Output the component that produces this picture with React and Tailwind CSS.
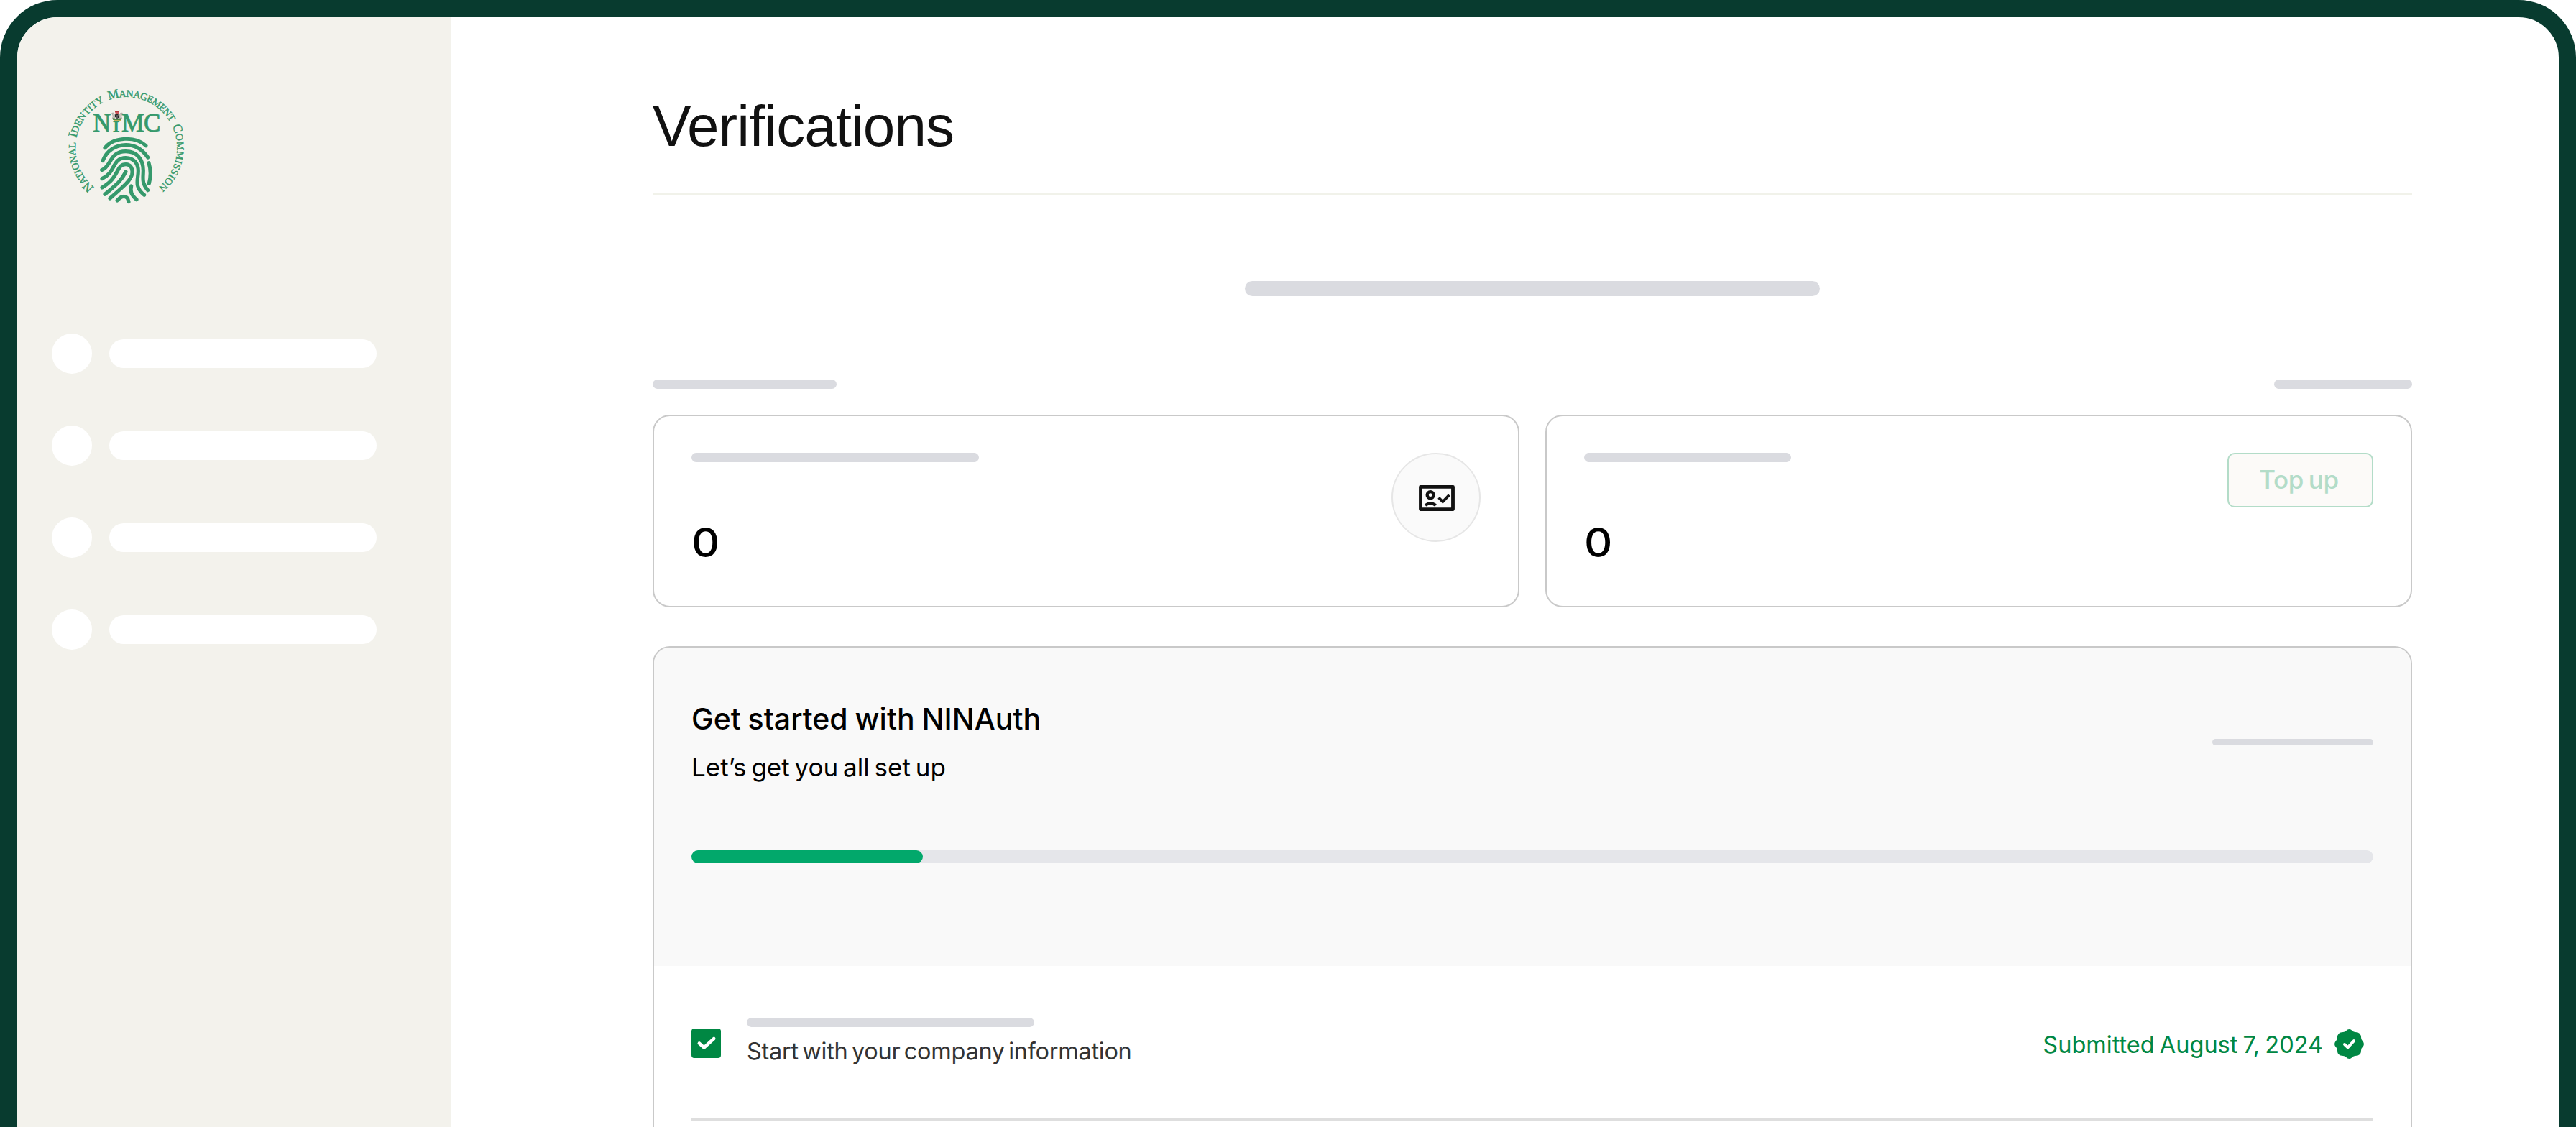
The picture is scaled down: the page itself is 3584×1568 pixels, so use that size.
const INK = "#35996b";

const RING_WORDS = [
  { first: "N", rest: "ATIONAL", start: 144, length: 212 },
  { first: "I", rest: "DENTITY", start: 374, length: 198 },
  { first: "M", rest: "ANAGEMENT", start: 591, length: 295 },
  { first: "C", rest: "OMMISSION", start: 905, length: 282 },
];

const RIDGES = [
  "M198 287C236 240 326 238 369 278",
  "M189 341C205 300 240 276 285 275C325 275 355 295 377 327",
  "M185 380C226 364 216 302 285 302C330 302 358 334 358 382C358 412 350 434 377 464",
  "M186 416C246 388 226 330 285 329C318 329 337 352 337 384C337 420 318 448 362 484",
  "M186 453C262 408 243 356 285 356C306 356 316 376 311 398C303 428 270 452 219 498",
  "M285 387C268 422 250 438 198 481",
  "M381 350C390 378 391 402 382 436",
  "M308 447C302 472 310 486 330 503",
  "M249 507C270 484 292 484 297 512",
];

function Logo() {
  return (
    <svg className="block size-[190px]" viewBox="0 0 570 570" fontFamily='"Liberation Serif", serif' fill={INK}>
      <defs>
        <path id="ring" d="M287 499A212 212 0 1 1 287.1 499" />
      </defs>
      {RING_WORDS.map((w) => (
        <text key={w.first} fontSize="42" stroke={INK} strokeWidth="1.2">
          <textPath href="#ring" startOffset={w.start} textLength={w.length} lengthAdjust="spacing">
            <tspan fontSize="53">{w.first}</tspan>
            {w.rest}
          </textPath>
        </text>
      ))}
      <g fontSize="105" stroke={INK} strokeWidth="2.5">
        <text x="148" y="219" textLength="75" lengthAdjust="spacingAndGlyphs">N</text>
        <text x="231" y="219" fontSize="64" textLength="28" lengthAdjust="spacingAndGlyphs">I</text>
        <text x="267" y="219" textLength="95" lengthAdjust="spacingAndGlyphs">M</text>
        <text x="360" y="219" textLength="70" lengthAdjust="spacingAndGlyphs">C</text>
      </g>
      <g>
        <path d="M239 131l10 4 10-4-2 9h-16z" fill="#b9343c" />
        <path d="M242 139h14v5h-14z" fill="#c8555a" />
        <path d="M227 142q8-4 11 4l2 18h-11l3-9zM271 142q-8-4-11 4l-2 18h11l-3-9z" fill="#c9c5bf" stroke="#8d8983" strokeWidth="1.5" />
        <path d="M240 144h18v13q-3 7-9 9-6-2-9-9z" fill="#26272a" />
        <path d="M242 147l7 8 7-8M249 155v9" fill="none" stroke="#e4e0da" strokeWidth="1.6" />
        <path d="M231 163q18 6 36 0v7q-18 5-36 0z" fill="#4f8b45" />
        <path d="M234 170q15 4 30 0v4q-15 4-30 0z" fill="#c9a94a" />
      </g>
      <g fill="none" stroke={INK} strokeWidth="15.5" strokeLinecap="round">
        {RIDGES.map((d) => (
          <path key={d} d={d} />
        ))}
      </g>
    </svg>
  );
}

function IdCheckIcon() {
  return (
    <svg className="mt-[2px] ml-[2px] h-[36px] w-[50px]" viewBox="0 0 150 108" fill="none" stroke="#111">
      <rect x="7.5" y="7" width="135" height="94" rx="1" strokeWidth="14.5" strokeLinejoin="round" />
      <circle cx="48.5" cy="41" r="13.5" strokeWidth="13" />
      <path d="M27 84Q48.5 68 71 84" strokeWidth="12" />
      <path d="M83 52L100 69L127 41" strokeWidth="11.5" />
    </svg>
  );
}

function Badge() {
  return (
    <svg className="size-[41px]" viewBox="0 0 41 41">
      <path
        d="M16 2.2Q20.5-2.2 25 2.2Q26.5 3.9 29 3.9Q37.1 3.9 37.1 12Q37.1 14.5 38.8 16Q43.2 20.5 38.8 25Q37.1 26.5 37.1 29Q37.1 37.1 29 37.1Q26.5 37.1 25 38.8Q20.5 43.2 16 38.8Q14.5 37.1 12 37.1Q3.9 37.1 3.9 29Q3.9 26.5 2.2 25Q-2.2 20.5 2.2 16Q3.9 14.5 3.9 12Q3.9 3.9 12 3.9Q14.5 3.9 16 2.2Z"
        fill="#008743"
      />
      <path d="M14 21L18.5 25.3L27 16.2" fill="none" stroke="#fff" strokeWidth="4" strokeLinecap="round" strokeLinejoin="round" />
    </svg>
  );
}

function Amount({ children }) {
  return (
    <p className="mt-[79px] w-fit origin-left scale-x-[1.09] text-[56px] leading-[66px] font-medium text-black">
      {children}
    </p>
  );
}

export default function App() {
  return (
    <div className="h-[1568px] w-[3584px] overflow-hidden bg-white font-['Inter',sans-serif]">
      <div className="flex h-[1700px] overflow-hidden rounded-t-[80px] border-24 border-[#083b2f] bg-white">
        <aside className="w-[604px] shrink-0 bg-[#f3f2ec] pl-12">
          <div className="pt-[86px] pl-2">
            <Logo />
          </div>
          <div className="mt-[164px] flex flex-col gap-[72px]">
            {[0, 1, 2, 3].map((i) => (
              <div key={i} className="flex items-center gap-6">
                <div className="size-14 rounded-full bg-white" />
                <div className="h-10 w-[372px] rounded-full bg-white" />
              </div>
            ))}
          </div>
        </aside>

        <main className="flex-1 pr-[204px] pl-[280px]">
          <h1 className="h-[244px] pt-[104px] font-['Liberation_Sans',sans-serif] text-[80px] leading-[96px] tracking-[-0.95px] text-[#111]">
            Verifications
          </h1>
          <div className="h-1 bg-[#f1f2ea]" />
          <div className="mx-auto mt-[119px] h-[21px] w-[800px] rounded-full bg-[#dadbe0]" />
          <div className="mt-[116px] flex justify-between">
            <div className="h-[13px] w-[256px] rounded-full bg-[#dadbe0]" />
            <div className="h-[13px] w-[192px] rounded-full bg-[#dadbe0]" />
          </div>

          <div className="mt-[36px] grid grid-cols-2 gap-9">
            <section className="flex h-[268px] justify-between rounded-3xl border-2 border-[#c9c9c9] p-13 pt-[51px]">
              <div>
                <div className="h-[13px] w-[400px] rounded-full bg-[#dadbe0]" />
                <Amount>0</Amount>
              </div>
              <div className="flex size-[124px] items-center justify-center rounded-full border-2 border-[#e6e6e6] bg-[#fafafa]">
                <IdCheckIcon />
              </div>
            </section>
            <section className="flex h-[268px] items-start justify-between rounded-3xl border-2 border-[#c9c9c9] p-13 pt-[51px]">
              <div>
                <div className="h-[13px] w-[288px] rounded-full bg-[#dadbe0]" />
                <Amount>0</Amount>
              </div>
              <button className="h-[76px] w-[203px] rounded-[10px] border-2 border-[#b3dcc8] bg-[#fcfaf8] pr-1 pb-[2px] text-[35px] font-medium tracking-[-0.3px] text-[#b3dcc8] [word-spacing:-2.5px]">
                Top up
              </button>
            </section>
          </div>

          <section className="mt-[54px] h-[800px] overflow-hidden rounded-3xl border-2 border-[#c9c9c9]">
            <header className="h-[443px] bg-[#f9f9f9] px-13 pt-[74px]">
              <div className="flex items-center justify-between">
                <div>
                  <h2 className="text-[41px] leading-[50px] font-medium text-black [word-spacing:-1px]">Get started with NINAuth</h2>
                  <p className="mt-[20px] text-[35px] leading-[44px] text-black [word-spacing:-3px]">Let’s get you all set up</p>
                </div>
                <div className="h-[9px] w-[224px] rounded-full bg-[#dadbe0]" />
              </div>
              <div className="mt-[94px] h-[18px] rounded-full bg-[#e5e6ea]">
                <div className="h-full w-[322px] rounded-full bg-[#02a86b]" />
              </div>
            </header>
            <div className="mx-13 flex h-[215px] items-start justify-between border-b-3 border-[#dedede] pt-[72px]">
              <div className="flex gap-9">
                <div className="mt-[15px] size-[41px] rounded bg-[#008743]">
                  <svg className="size-[41px]" viewBox="0 0 41 41" fill="none" stroke="#fff" strokeWidth="4.5" strokeLinecap="round" strokeLinejoin="round">
                    <path d="M10.8 20.5L17.5 26.5L31.3 14" />
                  </svg>
                </div>
                <div>
                  <div className="h-[13px] w-[400px] rounded-full bg-[#dadbe0]" />
                  <p className="mt-[14px] text-[32.5px] leading-[40px] tracking-[-0.27px] text-[#333] [word-spacing:-3.5px]">
                    Start with your company information
                  </p>
                </div>
              </div>
              <div className="mt-[15px] mr-[13px] flex items-center gap-4">
                <span className="pt-[3px] text-[32.5px] leading-[40px] text-[#008743] [word-spacing:-2px]">Submitted August 7, 2024</span>
                <Badge />
              </div>
            </div>
          </section>
        </main>
      </div>
    </div>
  );
}
